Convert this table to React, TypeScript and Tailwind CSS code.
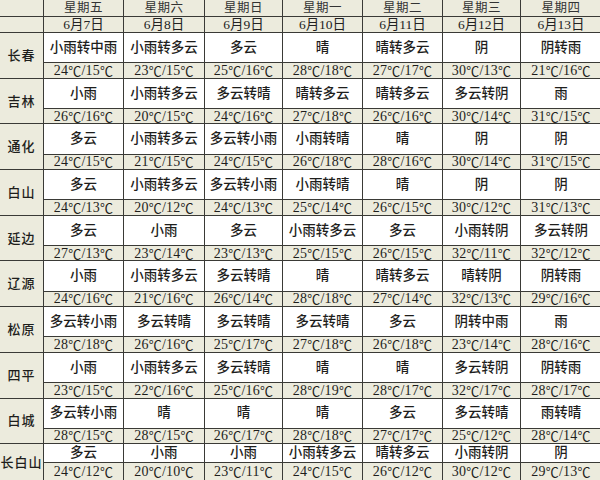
import React from "react";

const days = [
  ["星期五", "6月7日"],
  ["星期六", "6月8日"],
  ["星期日", "6月9日"],
  ["星期一", "6月10日"],
  ["星期二", "6月11日"],
  ["星期三", "6月12日"],
  ["星期四", "6月13日"],
];

type Row = [string, [string, string][]];

const data: Row[] = [
  ["长春", [["小雨转中雨", "24℃/15℃"], ["小雨转多云", "23℃/15℃"], ["多云", "25℃/16℃"], ["晴", "28℃/18℃"], ["晴转多云", "27℃/17℃"], ["阴", "30℃/13℃"], ["阴转雨", "21℃/16℃"]]],
  ["吉林", [["小雨", "26℃/16℃"], ["小雨转多云", "20℃/15℃"], ["多云转晴", "24℃/16℃"], ["晴转多云", "27℃/18℃"], ["晴转多云", "26℃/16℃"], ["多云转阴", "30℃/14℃"], ["雨", "31℃/15℃"]]],
  ["通化", [["多云", "24℃/15℃"], ["小雨转多云", "21℃/15℃"], ["多云转小雨", "24℃/15℃"], ["小雨转晴", "26℃/18℃"], ["晴", "28℃/16℃"], ["阴", "30℃/14℃"], ["阴", "31℃/15℃"]]],
  ["白山", [["多云", "24℃/13℃"], ["小雨转多云", "20℃/12℃"], ["多云转小雨", "24℃/13℃"], ["小雨转晴", "25℃/14℃"], ["晴", "26℃/15℃"], ["阴", "30℃/12℃"], ["阴", "31℃/13℃"]]],
  ["延边", [["多云", "27℃/13℃"], ["小雨", "23℃/14℃"], ["多云", "23℃/13℃"], ["小雨转多云", "25℃/15℃"], ["多云", "26℃/15℃"], ["小雨转阴", "32℃/11℃"], ["多云转阴", "32℃/12℃"]]],
  ["辽源", [["小雨", "24℃/16℃"], ["小雨转多云", "21℃/16℃"], ["多云转晴", "26℃/14℃"], ["晴", "28℃/18℃"], ["晴转多云", "27℃/14℃"], ["晴转阴", "32℃/13℃"], ["阴转雨", "29℃/16℃"]]],
  ["松原", [["多云转小雨", "28℃/18℃"], ["多云转晴", "26℃/16℃"], ["多云转晴", "25℃/17℃"], ["多云转晴", "27℃/18℃"], ["多云", "26℃/18℃"], ["阴转中雨", "23℃/14℃"], ["雨", "28℃/16℃"]]],
  ["四平", [["小雨", "23℃/15℃"], ["小雨转多云", "22℃/16℃"], ["多云转晴", "25℃/16℃"], ["晴", "28℃/19℃"], ["晴", "28℃/17℃"], ["多云转阴", "32℃/17℃"], ["阴转雨", "28℃/17℃"]]],
  ["白城", [["多云转小雨", "28℃/15℃"], ["晴", "28℃/15℃"], ["晴", "26℃/17℃"], ["晴", "28℃/18℃"], ["多云", "27℃/17℃"], ["多云转晴", "25℃/12℃"], ["雨转晴", "28℃/14℃"]]],
  ["长白山", [["多云", "24℃/12℃"], ["小雨", "20℃/10℃"], ["小雨", "23℃/11℃"], ["小雨转多云", "24℃/15℃"], ["晴转多云", "26℃/12℃"], ["小雨转阴", "30℃/12℃"], ["阴", "29℃/13℃"]]],
];

const font = { fontFamily: '"Liberation Serif", "Noto Sans CJK SC", serif' };
const cjk = { fontFamily: '"Noto Sans CJK SC", sans-serif' };

function Temp({ t }: { t: string }) {
  const parts = t.split("℃");
  return (
    <span className="inline-flex items-center leading-[13px]">
      {parts.map((p, i) => (
        <React.Fragment key={i}>
          {p}
          {i < parts.length - 1 && (
            <span style={cjk} className="inline-block text-[13px] font-normal leading-[13px]">
              ℃
            </span>
          )}
        </React.Fragment>
      ))}
    </span>
  );
}

export default function App() {
  const rowHeights = ["16px", "15px"];
  data.forEach((_, i) => {
    if (i < data.length - 1) rowHeights.push("29.3px", "14.4px");
    else rowHeights.push("18px", "17px");
  });
  return (
    <div className="w-[600px] h-[480px] overflow-hidden bg-white" style={font}>
      <div
        className="grid gap-px bg-[#3a3a36] text-[#1e1e1c]"
        style={{
          gridTemplateColumns: "43px 79px 80px 77px 79px 79px 77px 80px",
          gridTemplateRows: rowHeights.join(" "),
        }}
      >
        <div className="bg-[#ecebdd]" />
        {days.map(([d]) => (
          <div key={d} className="bg-[#ecebdd] flex items-center justify-center text-[12.5px] leading-none tracking-[0.5px] text-[#333]">
            {d}
          </div>
        ))}
        <div className="bg-[#ecebdd]" />
        {days.map(([w, d]) => (
          <div key={d + w} className="bg-[#ecebdd] flex items-center justify-center text-[13.5px] leading-none text-[#222]">
            {d}
          </div>
        ))}
        {data.map(([city, cells]) => (
          <React.Fragment key={city}>
            <div className="row-span-2 bg-[#ecebdd] flex items-center justify-center text-[13px] leading-none font-medium tracking-[1px] whitespace-nowrap">
              {city}
            </div>
            {cells.map(([w], i) => (
              <div key={"w" + i} className="bg-white flex items-center justify-center text-[13.5px] leading-none font-medium whitespace-nowrap">
                {w}
              </div>
            ))}
            {cells.map(([, t], i) => (
              <div key={"t" + i} className="bg-[#ecebdd] flex items-center justify-center text-[14px] leading-[13px] tracking-[0.2px] font-medium whitespace-nowrap">
                <Temp t={t} />
              </div>
            ))}
          </React.Fragment>
        ))}
      </div>
    </div>
  );
}
